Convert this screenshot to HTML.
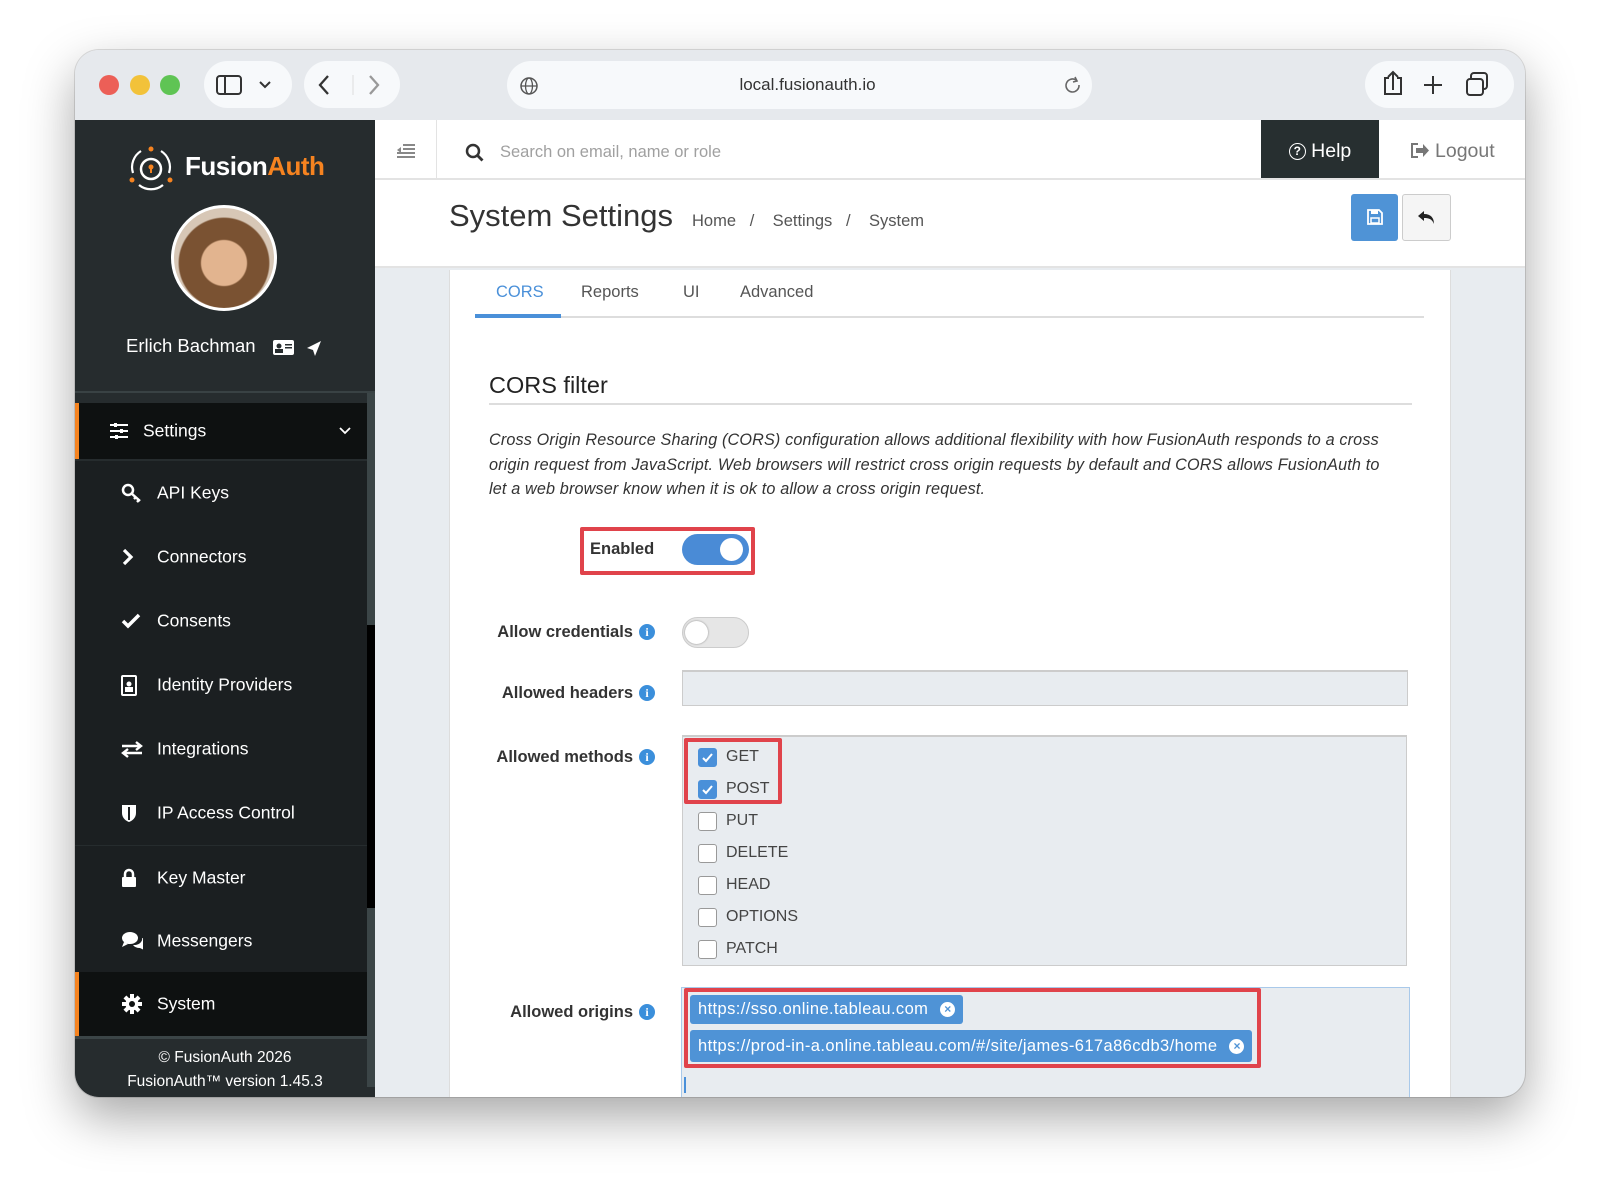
<!DOCTYPE html>
<html><head><meta charset="utf-8"><style>
*{box-sizing:border-box;margin:0;padding:0}
body{width:1600px;height:1196px;background:#fff;font-family:"Liberation Sans",sans-serif;position:relative;overflow:hidden}
.a{position:absolute}
#win{left:75px;top:50px;width:1450px;height:1047px;border-radius:24px;overflow:hidden;background:#e8ecf0;box-shadow:0 20px 50px rgba(0,0,0,.35),0 0 0 1px rgba(0,0,0,.12)}
.tb{left:0;top:0;width:1450px;height:70px;background:#e6e9ed}
.pill{background:#f7f9fb;border-radius:24px}
.dot{width:20px;height:20px;border-radius:50%}
.side{left:0;top:70px;width:300px;height:977px;background:#262c2e}
.menu{left:0;width:292px;height:64px;background:#1b1f21;color:#fff;font-size:17.5px}
.menu span.t{position:absolute;left:82px;top:50%;transform:translateY(-50%)}
.menu .ic{position:absolute;left:46px;top:50%;transform:translateY(-50%);width:22px;text-align:center;font-size:18px}
.lbl{font-weight:bold;font-size:16.5px;color:#333;text-align:right;width:220px}
.info{display:inline-block;width:16px;height:16px;border-radius:50%;background:#3b8fdb;color:#fff;font-size:12px;text-align:center;line-height:16px;font-family:"Liberation Serif",serif;font-weight:bold;vertical-align:1px;margin-left:6px}
.cb{width:19px;height:19px;border:1px solid #999;border-radius:3px;background:#fff}
.cb.on{background:#4a90d9;border-color:#4a90d9}
.mt{font-size:16px;color:#444;left:43px}
.tag{background:#4f93d6;color:#fff;font-size:16.5px;letter-spacing:.4px;border-radius:3px;padding:0 8px;line-height:29px;height:29px}
.x{display:inline-block;width:15px;height:15px;border-radius:50%;background:#fff;color:#4f93d6;font-size:12px;line-height:15px;text-align:center;font-weight:bold;margin-left:12px;vertical-align:1px;letter-spacing:0}
.red{border:4px solid #e0434b;border-radius:2px}
</style></head><body>
<div id="win" class="a">
 <div class="a tb"></div>
 <div class="a dot" style="left:24px;top:25px;background:#ec5f57"></div>
 <div class="a dot" style="left:55px;top:25px;background:#f2c23a"></div>
 <div class="a dot" style="left:85px;top:25px;background:#5fc454"></div>
 <div class="a pill" style="left:129px;top:11px;width:88px;height:47px"></div>
 <svg class="a" style="left:140px;top:24px" width="70" height="22"><rect x="2" y="2" width="24" height="18" rx="3" fill="none" stroke="#333" stroke-width="2"/><line x1="10" y1="2" x2="10" y2="20" stroke="#333" stroke-width="2"/><path d="M45 8l5 5 5-5" fill="none" stroke="#333" stroke-width="2"/></svg>
 <div class="a pill" style="left:229px;top:11px;width:96px;height:47px"></div>
 <svg class="a" style="left:240px;top:22px" width="80" height="26"><path d="M13 4l-8 9 8 9" fill="none" stroke="#333" stroke-width="2.3"/><line x1="38" y1="3" x2="38" y2="23" stroke="#ddd"/><path d="M55 4l8 9-8 9" fill="none" stroke="#999" stroke-width="2.3"/></svg>
 <div class="a pill" style="left:432px;top:11px;width:585px;height:48px"></div>
 <svg class="a" style="left:444px;top:26px" width="20" height="20"><circle cx="10" cy="10" r="8" fill="none" stroke="#555" stroke-width="1.5"/><ellipse cx="10" cy="10" rx="3.5" ry="8" fill="none" stroke="#555" stroke-width="1.3"/><line x1="2" y1="10" x2="18" y2="10" stroke="#555" stroke-width="1.3"/></svg>
 <div class="a" style="left:440px;top:25px;width:585px;text-align:center;font-size:17px;color:#333">local.fusionauth.io</div>
 <svg class="a" style="left:988px;top:26px" width="20" height="20"><path d="M16 9a6.5 6.5 0 1 1-3-5" fill="none" stroke="#666" stroke-width="1.6"/><path d="M12 1l2 4-4 1" fill="none" stroke="#666" stroke-width="1.6"/></svg>
 <div class="a pill" style="left:1290px;top:11px;width:149px;height:47px"></div>
 <svg class="a" style="left:1300px;top:18px" width="130" height="34"><path d="M14 10h-4v16h16v-16h-4M18 22V4M13 9l5-5 5 5" fill="none" stroke="#333" stroke-width="2"/><path d="M58 8v18M49 17h18" stroke="#333" stroke-width="2"/><rect x="92" y="11" width="16" height="16" rx="3" fill="none" stroke="#333" stroke-width="2"/><path d="M96 11V8a3 3 0 0 1 3-3h10a3 3 0 0 1 3 3v10a3 3 0 0 1-3 3h-1" fill="none" stroke="#333" stroke-width="2"/></svg>

 <!-- sidebar -->
 <div class="a side"></div>
 <svg class="a" style="left:52px;top:95px" width="48" height="46"><path d="M14 6A19 19 0 0 0 6 28M34 6A19 19 0 0 1 42 28M12 40a19 19 0 0 0 24 0" fill="none" stroke="#fff" stroke-width="2.2"/><circle cx="24" cy="24" r="10" fill="none" stroke="#fff" stroke-width="2.5"/><circle cx="24" cy="22" r="2.5" fill="#f58320"/><rect x="23" y="22" width="2" height="6" fill="#f58320"/><circle cx="24" cy="4" r="2.5" fill="#f58320"/><circle cx="5" cy="35" r="2.5" fill="#f58320"/><circle cx="43" cy="35" r="2.5" fill="#f58320"/></svg>
 <div class="a" style="left:110px;top:101px;font-size:26px;font-weight:bold;letter-spacing:-.5px"><span style="color:#fff">Fusion</span><span style="color:#f58320">Auth</span></div>
 <div class="a" style="left:96px;top:155px;width:106px;height:106px;border-radius:50%;background:radial-gradient(circle at 50% 55%,#e2b48f 0 30%,#7a5232 32% 60%,#d7c7b6 62%);border:3px solid #fff"></div>
 <div class="a" style="left:51px;top:285px;font-size:18.5px;color:#fff">Erlich Bachman</div>
 <svg class="a" style="left:198px;top:289px" width="50" height="18"><rect x="0" y="1" width="21" height="15" rx="2" fill="#fff"/><circle cx="6" cy="7" r="2.5" fill="#262c2e"/><rect x="2" y="10" width="8" height="4" fill="#262c2e"/><rect x="12" y="5" width="7" height="1.5" fill="#262c2e"/><rect x="12" y="8" width="7" height="1.5" fill="#262c2e"/><path d="M34 9l14-7-6 15-2-6z" fill="#fff"/></svg>
 <div class="a" style="left:0;top:341px;width:300px;height:2px;background:#394244"></div>
 <div class="a" style="left:292px;top:343px;width:8px;height:694px;background:#3b4547"></div>
 <div class="a" style="left:292px;top:575px;width:8px;height:283px;background:#000"></div>
 <div class="a menu" style="top:353px;height:56px;background:#0e1111"><div class="a" style="left:0;top:0;width:4px;height:56px;background:#f58320"></div><svg class="ic" width="20" height="18" style="left:34px"><path d="M1 3h18M1 9h18M1 15h18" stroke="#fff" stroke-width="2"/><rect x="5" y="1" width="3" height="4" fill="#fff"/><rect x="11" y="7" width="3" height="4" fill="#fff"/><rect x="6" y="13" width="3" height="4" fill="#fff"/></svg><span class="t" style="left:68px">Settings</span><svg class="a" style="right:16px;top:24px" width="12" height="8"><path d="M1 1l5 5 5-5" fill="none" stroke="#fff" stroke-width="1.8"/></svg></div>
 <div class="a menu" style="top:411px"><svg class="ic" width="22" height="20"><circle cx="7" cy="7" r="5" fill="none" stroke="#fff" stroke-width="2.5"/><path d="M10 10l9 8M15 14l-2 2M18 17l-2 2" stroke="#fff" stroke-width="2.5"/></svg><span class="t">API Keys</span></div>
 <div class="a menu" style="top:475px"><svg class="ic" width="14" height="18"><path d="M3 2l7 7-7 7" fill="none" stroke="#fff" stroke-width="3.2"/></svg><span class="t">Connectors</span></div>
 <div class="a menu" style="top:539px"><svg class="ic" width="20" height="16"><path d="M2 8l5 5 11-11" fill="none" stroke="#fff" stroke-width="3.5"/></svg><span class="t">Consents</span></div>
 <div class="a menu" style="top:603px"><svg class="ic" width="16" height="22"><rect x="1" y="2" width="14" height="19" rx="1" fill="none" stroke="#fff" stroke-width="2"/><circle cx="8" cy="10" r="2.5" fill="#fff"/><rect x="4" y="13" width="8" height="5" fill="#fff"/></svg><span class="t">Identity Providers</span></div>
 <div class="a menu" style="top:667px"><svg class="ic" width="22" height="18"><path d="M1 6h18M15 2l5 4-5 4M21 13H3M7 9l-5 4 5 4" fill="none" stroke="#fff" stroke-width="2.4"/></svg><span class="t">Integrations</span></div>
 <div class="a menu" style="top:731px"><svg class="ic" width="16" height="20"><path d="M1 2h14v8c0 5-4 8-7 9-3-1-7-4-7-9z" fill="#fff"/><path d="M8 4v13" stroke="#1b1f21" stroke-width="2"/></svg><span class="t">IP Access Control</span></div>
 <div class="a menu" style="top:796px"><svg class="ic" width="16" height="20"><path d="M4 9V6a4 4 0 0 1 8 0v3" fill="none" stroke="#fff" stroke-width="2.5"/><rect x="1" y="9" width="14" height="10" rx="1" fill="#fff"/></svg><span class="t">Key Master</span></div>
 <div class="a menu" style="top:859px"><svg class="ic" width="24" height="20"><ellipse cx="9" cy="7" rx="8" ry="6" fill="#fff"/><path d="M3 11l-2 5 6-3z" fill="#fff"/><path d="M12 14a8 6 0 0 0 9-7 7 5 0 0 1 1 9l1 3-4-2a8 6 0 0 1-7-3z" fill="#fff"/></svg><span class="t">Messengers</span></div>
 <div class="a menu" style="top:922px;background:#0e1111"><div class="a" style="left:0;top:0;width:4px;height:64px;background:#f58320"></div><svg class="ic" width="20" height="20" viewBox="0 0 20 20"><g fill="#fff"><circle cx="10" cy="10" r="6.5"/><rect x="8" y="0" width="4" height="20"/><rect x="0" y="8" width="20" height="4"/><rect x="8" y="0" width="4" height="20" transform="rotate(45 10 10)"/><rect x="8" y="0" width="4" height="20" transform="rotate(-45 10 10)"/></g><circle cx="10" cy="10" r="3" fill="#0e1111"/></svg><span class="t">System</span></div>
 <div class="a" style="left:0;top:986px;width:300px;height:3px;background:#3b4547"></div>
 <div class="a" style="left:0;top:996px;width:300px;text-align:center;color:#fff;font-size:15.5px;line-height:24px">© FusionAuth 2026<br>FusionAuth™ version 1.45.3</div>

 <!-- header -->
 <div class="a" style="left:300px;top:70px;width:1150px;height:60px;background:#fff;border-bottom:2px solid #e3e3e3"></div>
 <svg class="a" style="left:321px;top:93px" width="20" height="16"><path d="M7 2h12M7 6h12M1 10h18M1 14h18" stroke="#888" stroke-width="2"/><path d="M5 4l-4 3 4 3z" fill="#888"/></svg>
 <div class="a" style="left:361px;top:70px;width:1px;height:58px;background:#e3e3e3"></div>
 <svg class="a" style="left:390px;top:93px" width="20" height="20"><circle cx="8" cy="8" r="6" fill="none" stroke="#333" stroke-width="2.5"/><path d="M12.5 12.5l5 5" stroke="#333" stroke-width="2.8"/></svg>
 <div class="a" style="left:425px;top:93px;font-size:16.5px;color:#a0a0a0">Search on email, name or role</div>
 <div class="a" style="left:1186px;top:70px;width:118px;height:58px;background:#272f30;color:#fff;font-size:19.5px;line-height:62px;text-align:center"><span style="display:inline-block;width:17px;height:17px;border:1.8px solid #fff;border-radius:50%;font-size:12px;line-height:14px;vertical-align:2px;font-weight:bold">?</span> Help</div>
 <svg class="a" style="left:1335px;top:92px" width="20" height="17"><path d="M8 2H2v13h6" fill="none" stroke="#777" stroke-width="2"/><path d="M6 6h7V2l6 6.5-6 6.5v-4H6z" fill="#777"/></svg>
 <div class="a" style="left:1360px;top:72px;line-height:58px;font-size:19.5px;color:#777">Logout</div>

 <div class="a" style="left:300px;top:130px;width:1150px;height:88px;background:#fff;border-bottom:2px solid #e3e3e3"></div>
 <div class="a" style="left:374px;top:148px;font-size:31px;color:#333">System Settings</div>
 <div class="a" style="left:617px;top:162px;font-size:16.5px;color:#555">Home &nbsp;&nbsp;/&nbsp;&nbsp;&nbsp; Settings &nbsp;&nbsp;/&nbsp;&nbsp;&nbsp; System</div>
 <div class="a" style="left:1276px;top:144px;width:47px;height:47px;background:#4f93d6;border-radius:3px"></div>
 <svg class="a" style="left:1292px;top:159px" width="16" height="16"><path d="M1 1h11l3 3v11H1z" fill="none" stroke="#fff" stroke-width="1.8"/><rect x="4" y="1" width="7" height="4" fill="#fff"/><rect x="4" y="9" width="8" height="5" fill="none" stroke="#fff" stroke-width="1.5"/></svg>
 <div class="a" style="left:1327px;top:144px;width:49px;height:47px;background:#f5f5f5;border:1px solid #ccc;border-radius:3px"></div>
 <svg class="a" style="left:1342px;top:159px" width="20" height="18"><path d="M7 2L1 7l6 5V9c5 0 8 1 10 6 0-6-3-10-10-10z" fill="#222"/></svg>

 <!-- panel -->
 <div class="a" style="left:374px;top:220px;width:1002px;height:830px;background:#fff;border-left:1px solid #ddd;border-right:1px solid #ddd"></div>
 <div class="a" style="left:400px;top:266px;width:949px;height:2px;background:#ddd"></div>
 <div class="a" style="left:400px;top:264px;width:86px;height:4px;background:#4a90d9"></div>
 <div class="a" style="left:421px;top:233px;font-size:16.5px;color:#4a90d9">CORS</div>
 <div class="a" style="left:506px;top:233px;font-size:16.5px;color:#555">Reports</div>
 <div class="a" style="left:608px;top:233px;font-size:16.5px;color:#555">UI</div>
 <div class="a" style="left:665px;top:233px;font-size:16.5px;color:#555">Advanced</div>
 <div class="a" style="left:414px;top:322px;font-size:23.5px;color:#222">CORS filter</div>
 <div class="a" style="left:414px;top:353px;width:923px;height:2px;background:#ddd"></div>
 <div class="a" style="left:414px;top:378px;width:912px;font-size:16.2px;font-style:italic;color:#333;line-height:24.5px;letter-spacing:.15px">Cross Origin Resource Sharing (CORS) configuration allows additional flexibility with how FusionAuth responds to a cross origin request from JavaScript. Web browsers will restrict cross origin requests by default and CORS allows FusionAuth to let a web browser know when it is ok to allow a cross origin request.</div>

 <div class="a red" style="left:505px;top:477px;width:175px;height:48px;background:#fff"></div>
 <div class="a" style="left:515px;top:490px;font-weight:bold;font-size:16.5px;color:#333">Enabled</div>
 <div class="a" style="left:607px;top:484px;width:67px;height:31px;border-radius:16px;background:#4a8bd6"></div>
 <div class="a" style="left:645px;top:488px;width:23px;height:23px;border-radius:50%;background:#fff"></div>

 <div class="a lbl" style="left:360px;top:573px">Allow credentials<span class="info">i</span></div>
 <div class="a" style="left:607px;top:567px;width:67px;height:31px;border-radius:16px;background:#e6e6e6;border:1px solid #ccc"></div>
 <div class="a" style="left:610px;top:571px;width:23px;height:23px;border-radius:50%;background:#fff;box-shadow:0 0 2px rgba(0,0,0,.4)"></div>

 <div class="a lbl" style="left:360px;top:634px">Allowed headers<span class="info">i</span></div>
 <div class="a" style="left:607px;top:620px;width:726px;height:36px;background:#e8ecf0;border:1px solid #ccc;border-top-width:2px"></div>

 <div class="a lbl" style="left:360px;top:698px">Allowed methods<span class="info">i</span></div>
 <div class="a" style="left:607px;top:685px;width:725px;height:231px;background:#e8ecf0;border:1px solid #ccc;border-top-width:2px">
  <div class="a cb on" style="left:15px;top:11px"><svg width="17" height="17"><path d="M4 9l3 3 6-7" fill="none" stroke="#fff" stroke-width="2"/></svg></div><div class="a mt" style="top:11px">GET</div>
  <div class="a cb on" style="left:15px;top:43px"><svg width="17" height="17"><path d="M4 9l3 3 6-7" fill="none" stroke="#fff" stroke-width="2"/></svg></div><div class="a mt" style="top:43px">POST</div>
  <div class="a cb" style="left:15px;top:75px"></div><div class="a mt" style="top:75px">PUT</div>
  <div class="a cb" style="left:15px;top:107px"></div><div class="a mt" style="top:107px">DELETE</div>
  <div class="a cb" style="left:15px;top:139px"></div><div class="a mt" style="top:139px">HEAD</div>
  <div class="a cb" style="left:15px;top:171px"></div><div class="a mt" style="top:171px">OPTIONS</div>
  <div class="a cb" style="left:15px;top:203px"></div><div class="a mt" style="top:203px">PATCH</div>
 </div>
 <div class="a red" style="left:609px;top:688px;width:98px;height:66px"></div>

 <div class="a lbl" style="left:360px;top:953px">Allowed origins<span class="info">i</span></div>
 <div class="a" style="left:606px;top:937px;width:729px;height:120px;background:#e8ecf0;border:1px solid #a9c9ea"></div>
 <div class="a tag" style="left:615px;top:945px">https://sso.online.tableau.com<span class="x">&#215;</span></div>
 <div class="a tag" style="left:615px;top:980px;height:32px;line-height:32px">https://prod-in-a.online.tableau.com/#/site/james-617a86cdb3/home<span class="x">&#215;</span></div>
 <div class="a red" style="left:609px;top:938px;width:577px;height:80px"></div>
 <div class="a" style="left:609px;top:1027px;width:2px;height:16px;background:#4a90d9"></div>
</div>
</body></html>
